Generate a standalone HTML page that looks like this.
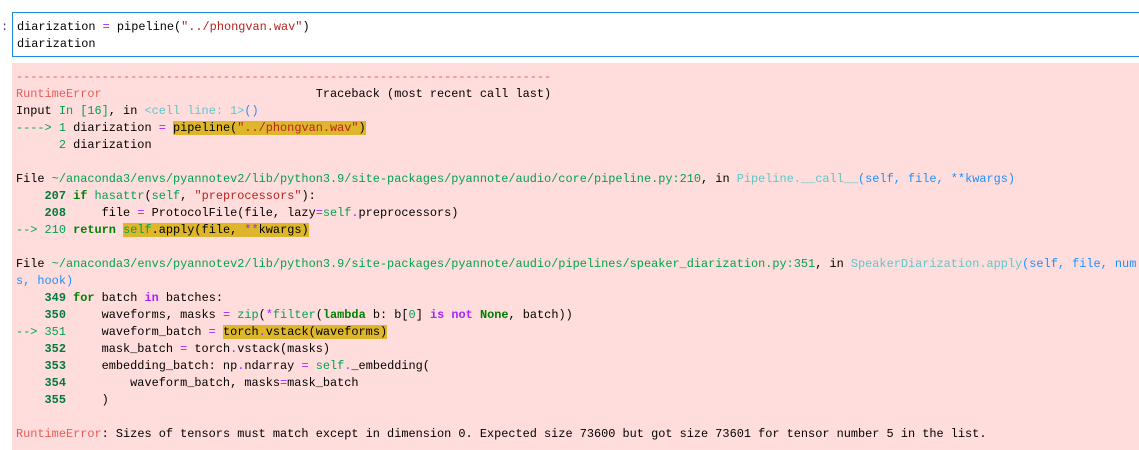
<!DOCTYPE html>
<html><head><meta charset="utf-8"><style>
html,body{margin:0;width:1139px;height:450px;overflow:hidden}
body{background:#fff;font-family:"Liberation Mono",monospace;font-size:11.9px;position:relative}
pre{margin:0;font:inherit;line-height:17px;white-space:pre}
.p{position:absolute;left:1px;top:20px;color:#303f9f}
.in{position:absolute;left:12px;top:12px;width:1130px;height:45px;border:1px solid #1e88e5;box-sizing:border-box;background:#fff;overflow:hidden}
.in pre{position:absolute;left:4px;top:6px;color:#000}
.out{position:absolute;left:12px;top:63px;width:1127px;height:387px;background:#fdd;overflow:hidden}
.out pre{position:absolute;left:4px;top:6px;color:#000}
.r{color:#e75c58}.g{color:#00a250}.c{color:#60c6c8}.b{color:#208ffb}
.h{background:#ddb62b}.k{color:#008000;font-weight:bold}.pu{color:#aa22ff;font-weight:bold}.s{color:#ba2121}.op{color:#aa22ff}
.n{color:#007a3d;font-weight:bold}
</style></head><body>
<div class="p">:</div>
<div class="in"><pre>diarization <span class="op">=</span> pipeline(<span class="s">"../phongvan.wav"</span>)
diarization</pre></div>
<div class="out"><pre><span class="r">---------------------------------------------------------------------------</span>
<span class="r">RuntimeError</span>                              Traceback (most recent call last)
Input <span class="g">In [16]</span>, in <span class="c">&lt;cell line: 1&gt;</span><span class="b">()</span>
<span class="g">----&gt; 1</span> diarization <span class="op">=</span> <span class="h">pipeline(<span class="s">"../phongvan.wav"</span>)</span>
<span class="g">      2</span> diarization

File <span class="g">~/anaconda3/envs/pyannotev2/lib/python3.9/site-packages/pyannote/audio/core/pipeline.py:210</span>, in <span class="c">Pipeline.__call__</span><span class="b">(self, file, **kwargs)</span>
<span class="n">    207</span> <span class="k">if</span> <span class="g">hasattr</span>(<span class="g">self</span>, <span class="s">"preprocessors"</span>):
<span class="n">    208</span>     file <span class="op">=</span> ProtocolFile(file, lazy<span class="op">=</span><span class="g">self</span><span class="op">.</span>preprocessors)
<span class="g">--&gt; 210</span> <span class="k">return</span> <span class="h"><span class="g">self</span>.apply(file, <span class="op">**</span>kwargs)</span>

File <span class="g">~/anaconda3/envs/pyannotev2/lib/python3.9/site-packages/pyannote/audio/pipelines/speaker_diarization.py:351</span>, in <span class="c">SpeakerDiarization.apply</span><span class="b">(self, file, num</span>
<span class="b">s, hook)</span>
<span class="n">    349</span> <span class="k">for</span> batch <span class="pu">in</span> batches:
<span class="n">    350</span>     waveforms, masks <span class="op">=</span> <span class="g">zip</span>(<span class="op">*</span><span class="g">filter</span>(<span class="k">lambda</span> b: b[<span class="g">0</span>] <span class="pu">is</span> <span class="pu">not</span> <span class="k">None</span>, batch))
<span class="g">--&gt; 351</span>     waveform_batch <span class="op">=</span> <span class="h">torch<span class="op">.</span>vstack(waveforms)</span>
<span class="n">    352</span>     mask_batch <span class="op">=</span> torch<span class="op">.</span>vstack(masks)
<span class="n">    353</span>     embedding_batch: np<span class="op">.</span>ndarray <span class="op">=</span> <span class="g">self</span><span class="op">.</span>_embedding(
<span class="n">    354</span>         waveform_batch, masks<span class="op">=</span>mask_batch
<span class="n">    355</span>     )

<span class="r">RuntimeError</span>: Sizes of tensors must match except in dimension 0. Expected size 73600 but got size 73601 for tensor number 5 in the list.</pre></div>
</body></html>
